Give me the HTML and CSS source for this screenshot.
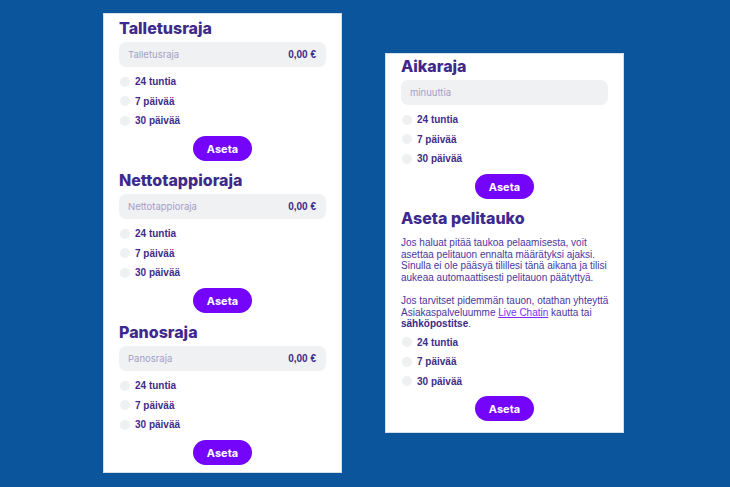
FILE: index.html
```html
<!DOCTYPE html>
<html lang="fi">
<head>
<meta charset="utf-8">
<link rel="stylesheet" href="styles.css">
</head>
<body>
<div class="page">
  <div class="panel panel-left">
    <section class="limit">
      <h2 class="title">Talletusraja</h2>
      <div class="field"><span class="ph">Talletusraja</span><span class="val">0,00 €</span></div>
      <div class="options">
        <div class="opt"><span class="dot"></span><span class="lbl">24 tuntia</span></div>
        <div class="opt"><span class="dot"></span><span class="lbl">7 päivää</span></div>
        <div class="opt"><span class="dot"></span><span class="lbl">30 päivää</span></div>
      </div>
      <div class="actions"><button class="btn">Aseta</button></div>
    </section>
    <section class="limit">
      <h2 class="title">Nettotappioraja</h2>
      <div class="field"><span class="ph">Nettotappioraja</span><span class="val">0,00 €</span></div>
      <div class="options">
        <div class="opt"><span class="dot"></span><span class="lbl">24 tuntia</span></div>
        <div class="opt"><span class="dot"></span><span class="lbl">7 päivää</span></div>
        <div class="opt"><span class="dot"></span><span class="lbl">30 päivää</span></div>
      </div>
      <div class="actions"><button class="btn">Aseta</button></div>
    </section>
    <section class="limit">
      <h2 class="title">Panosraja</h2>
      <div class="field"><span class="ph">Panosraja</span><span class="val">0,00 €</span></div>
      <div class="options">
        <div class="opt"><span class="dot"></span><span class="lbl">24 tuntia</span></div>
        <div class="opt"><span class="dot"></span><span class="lbl">7 päivää</span></div>
        <div class="opt"><span class="dot"></span><span class="lbl">30 päivää</span></div>
      </div>
      <div class="actions"><button class="btn">Aseta</button></div>
    </section>
  </div>
  <div class="panel panel-right">
    <section class="limit">
      <h2 class="title">Aikaraja</h2>
      <div class="field"><span class="ph">minuuttia</span></div>
      <div class="options">
        <div class="opt"><span class="dot"></span><span class="lbl">24 tuntia</span></div>
        <div class="opt"><span class="dot"></span><span class="lbl">7 päivää</span></div>
        <div class="opt"><span class="dot"></span><span class="lbl">30 päivää</span></div>
      </div>
      <div class="actions"><button class="btn">Aseta</button></div>
    </section>
    <section class="limit">
      <h2 class="title title-text">Aseta pelitauko</h2>
      <p class="info">Jos haluat pitää taukoa pelaamisesta, voit<br>asettaa pelitauon ennalta määrätyksi ajaksi.<br>Sinulla ei ole pääsyä tilillesi tänä aikana ja tilisi<br>aukeaa automaattisesti pelitauon päätyttyä.<br><br>Jos tarvitset pidemmän tauon, otathan yhteyttä<br>Asiakaspalveluumme <a class="link" href="#">Live Chatin</a> kautta tai<br><strong>sähköpostitse</strong>.</p>
      <div class="options options-tight">
        <div class="opt"><span class="dot"></span><span class="lbl">24 tuntia</span></div>
        <div class="opt"><span class="dot"></span><span class="lbl">7 päivää</span></div>
        <div class="opt"><span class="dot"></span><span class="lbl">30 päivää</span></div>
      </div>
      <div class="actions"><button class="btn">Aseta</button></div>
    </section>
  </div>
</div>
</body>
</html>
```

FILE: styles.css
```css
* { box-sizing: border-box; }
html, body { margin: 0; padding: 0; }
body {
  background: #0a559c;
  width: 730px;
  height: 487px;
  overflow: hidden;
  font-family: "Liberation Sans", Arial, sans-serif;
}
.page {
  display: flex;
  align-items: flex-start;
  gap: 43px;
  padding: 13px 0 0 103px;
}
.panel {
  width: 239px;
  background: #ffffff;
  border: 1px solid #d3deea;
  padding: 0 15px;
}
.panel-left { padding-top: 3px; padding-bottom: 7px; }
.panel-right { margin-top: 40px; padding-top: 1px; padding-bottom: 11px; }
.limit + .limit { margin-top: 8px; }
.title {
  margin: 0 0 3px;
  font-family: "Inter", "Liberation Sans", sans-serif;
  font-weight: 800;
  font-size: 16px;
  line-height: 22px;
  color: #3d2a8c;
  letter-spacing: 0;
}
.title-text { margin-bottom: 8px; }
.field {
  height: 25px;
  background: #f0f1f3;
  border-radius: 7px;
  display: flex;
  align-items: center;
  justify-content: space-between;
  padding: 0 10px 0 9px;
}
.ph {
  font-family: "Inter", "Liberation Sans", sans-serif;
  font-size: 9.5px;
  color: #a59dc8;
}
.val {
  font-size: 10px;
  font-weight: 700;
  color: #3d2a8c;
}
.options {
  margin-top: 5px;
  display: flex;
  flex-direction: column;
}
.options-tight { margin-top: 2.5px; }
.opt {
  height: 19.5px;
  display: flex;
  align-items: center;
  gap: 5px;
  padding-left: 1px;
}
.dot {
  width: 10px;
  height: 10px;
  border-radius: 50%;
  background: #eef0f2;
}
.lbl {
  font-size: 10px;
  font-weight: 700;
  color: #3f2d8a;
}
.actions {
  margin-top: 5.5px;
  display: flex;
  justify-content: center;
}
.btn {
  width: 59px;
  height: 25px;
  border: 0;
  border-radius: 13px;
  background: #7405fa;
  color: #ffffff;
  font-family: "Inter", "Liberation Sans", sans-serif;
  font-weight: 700;
  font-size: 11px;
  padding: 0;
  cursor: pointer;
}
.info {
  margin: 0;
  font-size: 10px;
  line-height: 11.6px;
  color: #4a36a0;
  white-space: nowrap;
}
.info strong { color: #3a2a80; }
.link { color: #7a2cff; text-decoration: underline; }
```
